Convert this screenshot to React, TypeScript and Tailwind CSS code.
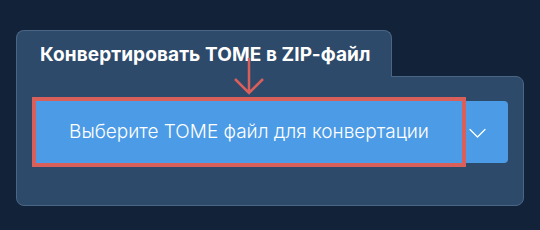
import React from "react";

const ChevronDown = () => (
  <svg width="17" height="10" viewBox="0 0 17 10" fill="none">
    <path d="M1 1.5l7.5 7.5 7.5-7.5" stroke="white" strokeWidth="1.3" strokeLinecap="round" strokeLinejoin="round" />
  </svg>
);

const App = () => {
  return (
    <div
      className="w-[540px] h-[230px] bg-[#112239] pt-[30px] pl-[16px]"
      style={{ fontFamily: "Inter, 'Noto Sans', sans-serif" }}
    >
      <div className="relative w-[508px] flex flex-col items-start">
        {/* --- Tab --- */}
        <div className="relative z-10 -mb-px w-[376px] h-[47px] bg-[#2d4a6a] border border-b-0 border-[#4a6686] rounded-t-[8px] pl-[23px] pt-[12px]">
          <h2 className="text-[19px] font-bold text-white tracking-[0.1px] leading-[24px]">
            Конвертировать TOME в ZIP-файл
          </h2>
        </div>

        {/* --- Panel --- */}
        <div className="w-[508px] h-[130px] bg-[#2d4a6a] border border-[#4a6686] rounded-b-[8px] rounded-tr-[8px] pl-[19px] pr-[14px] pt-[24px]">
          <div className="flex h-[62px]">
            <button className="w-[426px] h-full bg-[#4c9be6] text-white text-[19px] font-light outline-4 outline-[#d95f5b] z-10">
              Выберите TOME файл для конвертации
            </button>
            <button className="w-[46px] h-full bg-[#4c9be6] rounded-r-[4px] flex items-center pl-[7px] pt-[1px]">
              <ChevronDown />
            </button>
          </div>
        </div>

        {/* --- Arrow annotation --- */}
        <svg
          className="absolute left-[218px] top-[27px] z-20"
          width="30"
          height="38"
          viewBox="0 0 30 38"
          fill="none"
        >
          <path d="M15 1v35M1 22l14 14 14-14" stroke="#d95f5b" strokeWidth="2.5" />
        </svg>
      </div>
    </div>
  );
};

export default App;
